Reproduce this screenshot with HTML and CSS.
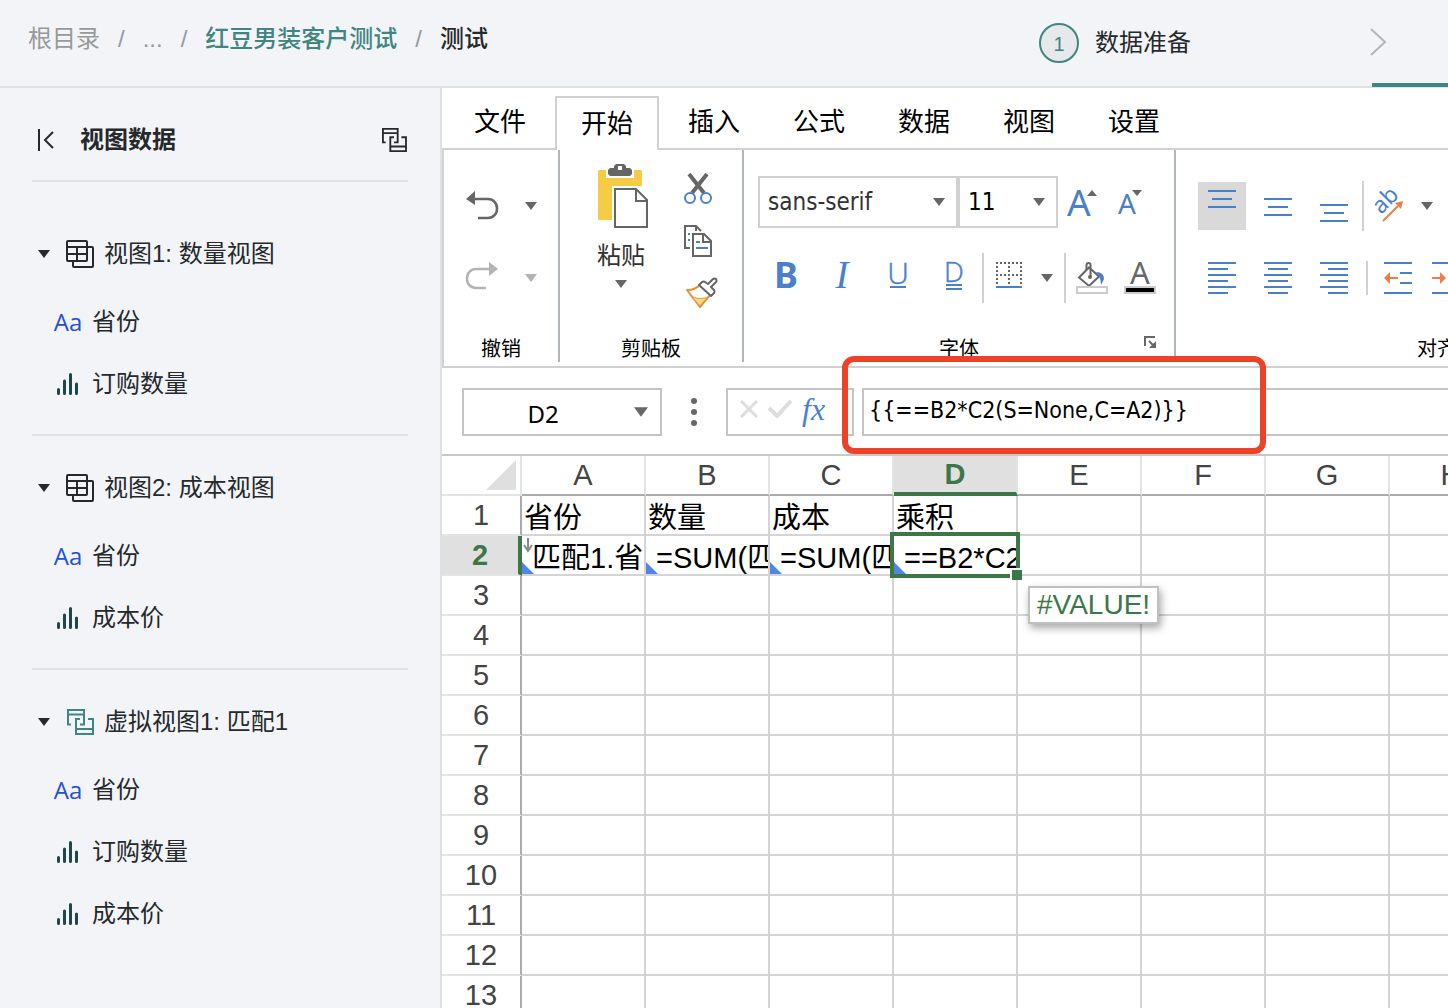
FILE: index.html
```html
<!DOCTYPE html>
<html lang="zh-CN">
<head>
<meta charset="utf-8">
<title>测试</title>
<meta name="viewport" content="width=device-width, initial-scale=1">
<link rel="stylesheet" href="styles.css">
</head>
<body>
<svg class="defs" aria-hidden="true">
  <symbol id="caret" viewBox="0 0 12 8"><path d="M0 0h12L6 8z" fill="currentColor"/></symbol>
  <symbol id="table" viewBox="0 0 28 28"><g fill="none" stroke="currentColor" stroke-width="2"><rect x="1" y="1" width="20" height="20" rx="1"/><path d="M1 7h20M1 14h20M11 7v14M21 7h5a1 1 0 0 1 1 1v18a1 1 0 0 1-1 1H8a1 1 0 0 1-1-1v-5"/></g></symbol>
  <symbol id="merge" viewBox="0 0 28 26"><g fill="none" stroke="currentColor" stroke-width="2"><path d="M5 15.500H2V1h16v14.500h-4M2 5.500h16M14 10h-4v15h17V10h-5M10 20h17"/></g></symbol>
  <symbol id="bars" viewBox="0 0 22 22"><path d="M1.500 16.500v4M7.500 8v12.500M13.500 1.500v19M19.500 11v9.500" fill="none" stroke="#1f4648" stroke-width="3" stroke-linecap="round"/></symbol>
</svg>
<div class="app">
  <header class="topbar">
    <nav class="crumbs" aria-label="路径">
      <a href="#" class="crumb">根目录</a><span>/</span>
      <a href="#" class="crumb">...</a><span>/</span>
      <a href="#" class="crumb crumb-link">红豆男装客户测试</a><span>/</span>
      <span class="crumb-current">测试</span>
    </nav>
    <div class="steps">
      <a href="#" class="step"><span class="step-num">1</span><span>数据准备</span></a>
      <div class="step-active">
        <svg width="16" height="28" viewBox="2 0 16 28"><path d="M1 1l14 13L1 27" fill="none" stroke="#b2b5b9" stroke-width="2"/></svg>
      </div>
    </div>
  </header>
  <div class="workspace">
    <aside class="sidebar">
      <div class="side-head">
        <button type="button" class="plain" aria-label="收起"><svg width="18" height="22" viewBox="0 0 18 22"><path d="M2 0v22M16 3L8 11l8 8" fill="none" stroke="currentColor" stroke-width="2"/></svg></button>
        <h2>视图数据</h2>
        <button type="button" class="plain" aria-label="匹配"><svg width="26" height="24"><use href="#merge"/></svg></button>
      </div>
      <section class="view">
        <h3><svg class="fold"><use href="#caret"/></svg><svg class="view-icon"><use href="#table"/></svg>视图1: 数量视图</h3>
        <ul>
          <li><span class="field-icon">Aa</span>省份</li>
          <li><span class="field-icon"><svg width="22" height="22"><use href="#bars"/></svg></span>订购数量</li>
        </ul>
      </section>
      <section class="view">
        <h3><svg class="fold"><use href="#caret"/></svg><svg class="view-icon"><use href="#table"/></svg>视图2: 成本视图</h3>
        <ul>
          <li><span class="field-icon">Aa</span>省份</li>
          <li><span class="field-icon"><svg width="22" height="22"><use href="#bars"/></svg></span>成本价</li>
        </ul>
      </section>
      <section class="view">
        <h3><svg class="fold"><use href="#caret"/></svg><svg class="view-icon virtual"><use href="#merge"/></svg>虚拟视图1: 匹配1</h3>
        <ul>
          <li><span class="field-icon">Aa</span>省份</li>
          <li><span class="field-icon"><svg width="22" height="22"><use href="#bars"/></svg></span>订购数量</li>
          <li><span class="field-icon"><svg width="22" height="22"><use href="#bars"/></svg></span>成本价</li>
        </ul>
      </section>
    </aside>
    <main class="editor">
      <div class="tabs">
        <button type="button" class="tab">文件</button>
        <button type="button" class="tab active">开始</button>
        <button type="button" class="tab">插入</button>
        <button type="button" class="tab">公式</button>
        <button type="button" class="tab">数据</button>
        <button type="button" class="tab">视图</button>
        <button type="button" class="tab">设置</button>
      </div>
      <div class="ribbon">
        <div class="group group-undo">
          <div class="tools tools-top">
            <button type="button" class="tool" aria-label="撤销"><svg width="32" height="32" viewBox="0 0 32 32"><path d="M0 9l9-8v14z" fill="#666"/><path d="M8 9h14a9 9 0 0 1 9 9.500a9 9 0 0 1-9 9.500h-10" fill="none" stroke="#666" stroke-width="2.500"/></svg></button>
            <button type="button" class="drop" aria-label="撤销列表"><svg><use href="#caret"/></svg></button>
          </div>
          <div class="tools tools-bottom faded">
            <button type="button" class="tool" aria-label="恢复"><svg width="32" height="32" viewBox="0 0 32 32"><path d="M32 7l-9-7v14z" fill="#b3b3b3"/><path d="M24 7H10a9 9 0 0 0-9 9.500a9 9 0 0 0 9 9.500h10" fill="none" stroke="#b3b3b3" stroke-width="2.500"/></svg></button>
            <button type="button" class="drop" aria-label="恢复列表"><svg><use href="#caret"/></svg></button>
          </div>
          <div class="group-label">撤销</div>
        </div>
        <div class="group group-clip">
          <div class="clip-body">
            <button type="button" class="paste">
              <svg width="50" height="64" viewBox="-2 0 50 64"><rect y="6" width="44" height="50" rx="1" fill="#f6cc46"/><path d="M8 3h28v11H8zM14 22h36v42H14z" fill="#fff"/><path d="M12 4h4V2l2-2h8l2 2v2h4l2 2v4l-2 2H12l-2-2V6z" fill="#666"/><path d="M20 2h4v4h-4z" fill="#fff"/><path d="M17 25h21l11 11v27H17zM38 25v12h11" fill="#fff" stroke="#666" stroke-width="2"/></svg>
              <span>粘贴</span>
              <svg class="paste-drop"><use href="#caret"/></svg>
            </button>
            <div class="clip-tools">
              <button type="button" class="plain" aria-label="剪切"><svg width="34" height="32" viewBox="0 0 34 32"><path d="M5 1l15 19M23 1L8 20" stroke="#666" stroke-width="4"/><g fill="#fff" stroke="#4a7fca" stroke-width="2"><circle cx="6" cy="25" r="5"/><circle cx="22" cy="25" r="5"/></g></svg></button>
              <button type="button" class="plain" aria-label="复制"><svg width="34" height="32" viewBox="0 0 34 32"><g fill="none" stroke="#666" stroke-width="2"><path d="M6 23H1V1h11l5 5M12 1v5"/><path d="M9 9h11l7 7v15H9z" fill="#fff"/><path d="M19 9v8h8"/></g><path d="M4 8h2v2H4zM4 14h2v2H4zM12 16h4v2h-4zM12 22h12v2H12z" fill="#4a7fca"/></svg></button>
              <button type="button" class="plain" aria-label="格式刷"><svg width="34" height="32" viewBox="0 0 34 32"><path d="M3 13c6 0 10-2 13-5l10 10L16 30z" fill="#fff" stroke="#e2913a" stroke-width="2" stroke-linejoin="round"/><path d="M6 18c6 5 11 3 17 3l-7 8z" fill="#f9d57c" stroke="#e2913a"/><path d="M15 8l3-3q2-1 3 0l3 2 5-5q2-1 3 0 1 2 0 3l-5 5 3 3q1 2 0 3l-3 3z" fill="#fff" stroke="#666" stroke-width="2" stroke-linejoin="round"/></svg></button>
            </div>
          </div>
          <div class="group-label">剪贴板</div>
        </div>
        <div class="group group-font">
          <div class="tools tools-top font-pickers">
            <label class="picker picker-font"><select aria-label="字体"><option>sans-serif</option></select><svg><use href="#caret"/></svg></label>
            <label class="picker picker-size"><select aria-label="字号"><option>11</option></select><svg><use href="#caret"/></svg></label>
            <button type="button" class="tool" aria-label="增大字号"><svg width="32" height="32" viewBox="0 0 32 32"><text x="1" y="30" class="glyph" font-size="37">A</text><path d="M21 10h10l-5-6z" fill="#666"/></svg></button>
            <button type="button" class="tool" aria-label="减小字号"><svg width="32" height="32" viewBox="0 0 32 32"><text x="4" y="28" class="glyph" font-size="28">A</text><path d="M18 4h10l-5 6z" fill="#666"/></svg></button>
          </div>
          <div class="tools tools-bottom">
            <div class="spaced">
              <button type="button" class="tool" aria-label="加粗"><svg width="32" height="32" viewBox="0 0 32 32"><text x="16" y="26" text-anchor="middle" class="glyph bold" font-size="36">B</text></svg></button>
              <button type="button" class="tool" aria-label="倾斜"><svg width="32" height="32" viewBox="0 0 32 32"><text x="16" y="26" text-anchor="middle" class="glyph italic" font-size="39">I</text></svg></button>
              <button type="button" class="tool" aria-label="下划线"><svg width="32" height="32" viewBox="0 0 32 32"><text x="16" y="22" text-anchor="middle" class="glyph light" font-size="30">U</text><path d="M8 25h16" stroke="#4a7fca" stroke-width="2"/></svg></button>
              <button type="button" class="tool" aria-label="双下划线"><svg width="32" height="32" viewBox="0 0 32 32"><text x="16" y="20" text-anchor="middle" class="glyph light" font-size="28">D</text><path d="M8 23h16M8 27h16" stroke="#4a7fca" stroke-width="2"/></svg></button>
            </div>
            <span class="sep"></span>
            <button type="button" class="tool" aria-label="边框"><svg width="32" height="32" viewBox="0 0 32 32"><path d="M2 1h26M2 13h26M3 0v22M15 0v22M27 0v22" fill="none" stroke="#666" stroke-width="2" stroke-dasharray="2 2"/><path d="M2 25h26" stroke="#4a7fca" stroke-width="2"/></svg></button>
            <button type="button" class="drop narrow" aria-label="边框样式"><svg><use href="#caret"/></svg></button>
            <span class="sep"></span>
            <button type="button" class="tool" aria-label="填充颜色"><svg width="32" height="32" viewBox="0 0 32 32"><path d="M3 15.500L13 5.500l10 9-10 9.500z" fill="#fff" stroke="#666" stroke-width="2"/><path d="M10.500 8V3q0-2 2-2t2 2v12" fill="none" stroke="#666" stroke-width="2"/><circle cx="14" cy="15" r="2" fill="#666"/><path d="M20 10q8 0 8 7l-3 6q0-8-5-13z" fill="#4a7fca"/><rect x="1" y="25" width="30" height="6" fill="#fff" stroke="#ccc" stroke-width="2"/></svg></button>
            <button type="button" class="tool" aria-label="字体颜色"><svg width="32" height="32" viewBox="0 0 32 32"><text x="16" y="22" text-anchor="middle" class="glyph grey" font-size="31">A</text><rect x="1" y="25" width="30" height="6" fill="#000" stroke="#ccc" stroke-width="2"/></svg></button>
          </div>
          <div class="group-label">字体</div>
          <button type="button" class="launcher" aria-label="字体设置"><svg width="12" height="12" viewBox="0 0 12 12"><path d="M1 10V1h10" fill="none" stroke="#666" stroke-width="2"/><path d="M5 5l4 4" stroke="#666" stroke-width="2"/><path d="M12 5v7H5z" fill="#666"/></svg></button>
        </div>
        <div class="group group-align">
          <div class="tools tools-top">
            <div class="spaced">
              <button type="button" class="tool pressed" aria-label="顶端对齐"><svg width="28" height="32" viewBox="0 0 28 32"><path class="line" d="M0 1h28M4 9h20M0 17h28"/></svg></button>
              <button type="button" class="tool" aria-label="垂直居中"><svg width="28" height="32" viewBox="0 0 28 32"><path class="line" d="M0 9h28M4 17h20M0 25h28"/></svg></button>
              <button type="button" class="tool" aria-label="底端对齐"><svg width="28" height="32" viewBox="0 0 28 32"><path class="line" d="M0 15h28M4 23h20M0 31h28"/></svg></button>
            </div>
            <span class="sep"></span>
            <button type="button" class="tool" aria-label="文字方向"><svg width="32" height="32" viewBox="0 0 32 32"><text x="7" y="25" transform="rotate(-45 7 25)" class="glyph" font-size="23">ab</text><path d="M9 31l15-15" stroke="#ec7e4b" stroke-width="2"/><path d="M29 11l-2 8-6-6z" fill="#ec7e4b"/></svg></button>
            <button type="button" class="drop narrow" aria-label="文字方向列表"><svg><use href="#caret"/></svg></button>
          </div>
          <div class="tools tools-bottom">
            <div class="spaced">
              <button type="button" class="tool" aria-label="左对齐"><svg width="28" height="32" viewBox="0 0 28 32"><path class="line" d="M0 1h28M0 7h20M0 13h28M0 19h20M0 25h28M0 31h20"/></svg></button>
              <button type="button" class="tool" aria-label="居中"><svg width="28" height="32" viewBox="0 0 28 32"><path class="line" d="M0 1h28M4 7h20M0 13h28M4 19h20M0 25h28M4 31h20"/></svg></button>
              <button type="button" class="tool" aria-label="右对齐"><svg width="28" height="32" viewBox="0 0 28 32"><path class="line" d="M0 1h28M8 7h20M0 13h28M8 19h20M0 25h28M8 31h20"/></svg></button>
            </div>
            <span class="sep sep-short"></span>
            <button type="button" class="tool" aria-label="减少缩进"><svg width="28" height="32" viewBox="0 0 28 32"><path class="line" d="M0 1h28M16 11h12M16 21h12M0 31h28"/><path d="M5 16h9" stroke="#ec7e4b" stroke-width="2"/><path d="M0 16l6-6v12z" fill="#ec7e4b"/></svg></button>
            <button type="button" class="tool" aria-label="增加缩进"><svg width="28" height="32" viewBox="0 0 28 32"><path class="line" d="M0 1h28M16 11h12M16 21h12M0 31h28"/><path d="M0 16h9" stroke="#ec7e4b" stroke-width="2"/><path d="M14 16l-6-6v12z" fill="#ec7e4b"/></svg></button>
          </div>
          <div class="group-label">对齐方式</div>
        </div>
      </div>
      <div class="formula-bar">
        <label class="name-box"><input type="text" value="D2" aria-label="名称框"><svg><use href="#caret"/></svg></label>
        <svg class="dots" width="6" height="28" viewBox="0 0 6 28"><g fill="#666"><circle cx="3" cy="3" r="3"/><circle cx="3" cy="14" r="3"/><circle cx="3" cy="25" r="3"/></g></svg>
        <div class="fx-box">
          <button type="button" class="plain" aria-label="取消"><svg width="18" height="18" viewBox="0 0 18 18"><path d="M1 1l16 16M17 1L1 17" stroke="#ddd" stroke-width="3"/></svg></button>
          <button type="button" class="plain" aria-label="确认"><svg width="24" height="18" viewBox="0 0 24 18"><path d="M1 8l8 8L23 1" fill="none" stroke="#ddd" stroke-width="4"/></svg></button>
          <button type="button" class="plain fx" aria-label="插入函数">fx</button>
        </div>
        <input type="text" class="formula" aria-label="公式" value="{{==B2*C2(S=None,C=A2)}}">
        <div class="highlight"></div>
      </div>
      <div class="sheet">
        <table>
          <thead>
            <tr><th class="corner" aria-label="全选"></th><th>A</th><th>B</th><th>C</th><th class="on">D</th><th>E</th><th>F</th><th>G</th><th>H</th></tr>
          </thead>
          <tbody>
            <tr><th>1</th><td>省份</td><td>数量</td><td>成本</td><td>乘积</td><td></td><td></td><td></td><td></td></tr>
            <tr><th class="on">2</th>
              <td class="bound"><svg class="expand" width="10" height="16" viewBox="0 0 10 16"><path d="M5 0v12M1 7l4 6 4-6" fill="none" stroke="#888" stroke-width="2"/></svg><div class="clip">匹配1.省</div></td>
              <td class="bound"><div class="clip">=SUM(匹</div></td>
              <td class="bound"><div class="clip">=SUM(匹</div></td>
              <td class="bound current"><div class="clip">==B2*C2</div><div class="selection"></div><div class="handle"></div><div class="tip">#VALUE!</div></td>
              <td></td><td></td><td></td><td></td></tr>
            <tr><th>3</th><td></td><td></td><td></td><td></td><td></td><td></td><td></td><td></td></tr>
            <tr><th>4</th><td></td><td></td><td></td><td></td><td></td><td></td><td></td><td></td></tr>
            <tr><th>5</th><td></td><td></td><td></td><td></td><td></td><td></td><td></td><td></td></tr>
            <tr><th>6</th><td></td><td></td><td></td><td></td><td></td><td></td><td></td><td></td></tr>
            <tr><th>7</th><td></td><td></td><td></td><td></td><td></td><td></td><td></td><td></td></tr>
            <tr><th>8</th><td></td><td></td><td></td><td></td><td></td><td></td><td></td><td></td></tr>
            <tr><th>9</th><td></td><td></td><td></td><td></td><td></td><td></td><td></td><td></td></tr>
            <tr><th>10</th><td></td><td></td><td></td><td></td><td></td><td></td><td></td><td></td></tr>
            <tr><th>11</th><td></td><td></td><td></td><td></td><td></td><td></td><td></td><td></td></tr>
            <tr><th>12</th><td></td><td></td><td></td><td></td><td></td><td></td><td></td><td></td></tr>
            <tr><th>13</th><td></td><td></td><td></td><td></td><td></td><td></td><td></td><td></td></tr>
          </tbody>
        </table>
      </div>
    </main>
  </div>
</div>
</body>
</html>
```
FILE: styles.css
```css
* { box-sizing: border-box; }

body {
  margin: 0;
  font-family: "Liberation Sans", "Noto Sans CJK SC", sans-serif;
  font-size: 24px;
  line-height: 32px;
  color: #25292b;
  background: #f3f4f8;
}

button, input, select { font: inherit; color: inherit; }
button { margin: 0; padding: 0; border: 0; background: none; }
a { color: inherit; text-decoration: none; }
svg { display: block; flex: none; }
.defs { position: absolute; width: 0; height: 0; }
h2, h3, ul { margin: 0; padding: 0; list-style: none; }

.app { display: flex; flex-direction: column; height: 100vh; overflow: hidden; }

/* top bar */
.topbar {
  flex: none;
  display: flex;
  justify-content: space-between;
  height: 88px;
  border-bottom: 2px solid #dde1e5;
}
.crumbs { display: flex; align-items: center; gap: 18px; padding: 0 0 8px 28px; color: #97999b; white-space: nowrap; }
.crumb-link { color: #3f8580; font-weight: 500; }
.crumb-current { color: #25292b; font-weight: 500; }
.steps { display: flex; }
.step { display: flex; align-items: center; gap: 16px; margin-right: 181px; white-space: nowrap; }
.step-num {
  width: 40px;
  height: 40px;
  border: 2px solid #3f8580;
  border-radius: 50%;
  background: #e6e8eb;
  color: #3f8580;
  font-size: 20px;
  line-height: 38px;
  text-align: center;
}
.step-active {
  display: flex;
  align-items: center;
  width: 76px;
  margin-bottom: -1px;
  border-bottom: 4px solid #3f8580;
}
.step-active svg { overflow: visible; }

.workspace { flex: 1; display: flex; min-height: 0; }

/* sidebar */
.sidebar { flex: none; width: 442px; padding: 0 32px; border-right: 2px solid #dde1e5; }
.side-head {
  display: flex;
  align-items: center;
  height: 94px;
  margin-bottom: 20px;
  padding: 12px 1px 0 5px;
  border-bottom: 2px solid #dde1e5;
}
.side-head h2 { flex: 1; padding-left: 25px; font-size: 24px; font-weight: 700; }
.view { padding: 15px 0 19px; border-bottom: 2px solid #dde1e5; }
.view:last-child { border-bottom: 0; }
.view h3 { display: flex; align-items: center; height: 74px; padding-left: 6px; font-size: 24px; font-weight: 400; white-space: nowrap; }
.view li { display: flex; align-items: center; height: 62px; padding-left: 21px; }
.fold { width: 12px; height: 8px; margin-right: 16px; }
.view-icon { width: 28px; height: 28px; margin-right: 10px; }
.virtual { color: #3f8580; }
.field-icon { display: flex; justify-content: center; width: 30px; margin-right: 9px; font-family: "Open Sans", sans-serif; color: #2450d8; }

/* tabs */
.editor { flex: 1; min-width: 0; display: flex; flex-direction: column; background: #fff; color: #000; }
.tabs { flex: none; display: flex; align-items: flex-end; gap: 1px; height: 62px; padding-left: 6px; border-bottom: 2px solid #d1d1d1; }
.tab { width: 104px; height: 52px; font-size: 26px; }
.tab.active { height: 54px; margin: 0 2px -2px; border: 2px solid #d1d1d1; border-bottom: 0; background: #fff; }

/* ribbon */
.ribbon { flex: none; display: flex; height: 218px; overflow: hidden; border-left: 2px solid #d1d1d1; border-bottom: 2px solid #d1d1d1; }
.group { flex: none; display: flex; flex-direction: column; position: relative; height: 212px; padding-top: 20px; border-right: 2px solid #b0b6bb; }
.group-label { margin-top: auto; font-size: 20px; line-height: 26px; text-align: center; }
.group-undo { width: 116px; }
.group-clip { width: 184px; }
.group-font { width: 432px; }
.group-align { width: 564px; }
.group-undo .tools { padding-left: 14px; }
.group-font .tools { padding-left: 18px; }
.group-font .font-pickers { padding-left: 14px; }
.group-align .tools { padding-left: 22px; }
.tools { display: flex; align-items: center; height: 72px; }
.font-pickers { padding-bottom: 8px; }
.spaced { display: flex; gap: 8px; }
.plain { display: flex; align-items: center; }
.tool { display: flex; flex: none; align-items: center; justify-content: center; width: 48px; height: 48px; }
.tool svg { overflow: visible; }
.pressed { background: #d9d9d9; }
.drop { display: flex; flex: none; align-items: center; justify-content: center; width: 50px; height: 48px; color: #666; }
.drop svg, .picker svg, .paste-drop { width: 12px; height: 8px; color: #666; }
.narrow { width: 26px; }
.faded .drop svg { color: #b3b3b3; }
.sep { flex: none; width: 2px; height: 50px; margin: 0 2px 0 4px; background: #d1d1d1; }
.sep-short { height: 34px; margin: 0 6px 0 8px; }
.line { stroke: #4a7fca; stroke-width: 2; }
.glyph { font-family: "Noto Sans", sans-serif; fill: #4a7fca; }
.bold { font-weight: 700; }
.italic { font-family: "Liberation Serif", serif; font-style: italic; }
.light { font-family: "Open Sans", sans-serif; font-weight: 300; stroke: #4a7fca; stroke-width: 0.5; }
.grey { fill: #666; }

.clip-body { display: flex; justify-content: space-between; margin-top: -6px; padding: 0 24px 0 36px; }
.paste { display: flex; flex-direction: column; align-items: center; color: #333; }
.paste > svg { overflow: visible; }
.paste span { margin-top: 12px; line-height: 32px; }
.paste-drop { margin-top: 8px; }
.clip-tools { display: flex; flex-direction: column; gap: 20px; padding-top: 9px; }

.picker { display: flex; align-items: center; position: relative; height: 52px; }
.picker select { width: 100%; height: 100%; padding: 0 8px; border: 2px solid #d1d1d1; border-radius: 0; background: #fff; appearance: none; font-family: "DejaVu Sans Condensed", "Noto Sans", sans-serif; }
.picker svg { position: absolute; right: 13px; }
.picker-font { width: 200px; color: #333; }
.picker-size { width: 100px; }
.launcher { position: absolute; right: 18px; bottom: 14px; }

/* formula bar */
.formula-bar { flex: none; display: flex; position: relative; height: 88px; padding: 20px 0 18px 20px; border-bottom: 2px solid #c8c8c8; font-family: "Noto Sans", sans-serif; }
.name-box { display: flex; align-items: center; position: relative; width: 200px; height: 48px; }
.name-box input { width: 100%; height: 100%; padding: 2px 38px 0 0; border: 2px solid #c4c4c4; text-align: center; }
.name-box svg { position: absolute; right: 14px; width: 14px; height: 10px; color: #666; }
.dots { margin: 10px 29px; }
.fx-box { display: flex; align-items: center; gap: 10px; flex: none; width: 128px; height: 48px; padding: 0 0 6px 12px; border: 2px solid #c4c4c4; }
.fx { font-family: "Liberation Serif", serif; font-size: 32px; font-style: italic; color: #4a7fca; }
.formula { flex: 1; min-width: 0; height: 48px; margin-left: 8px; padding: 0 0 4px 5px; border: 2px solid #c4c4c4; border-right: 0; font-family: "DejaVu Sans Condensed", "Noto Sans", sans-serif; font-size: 23px; }
.highlight { position: absolute; left: 400px; top: -12px; width: 424px; height: 98px; border: 6px solid #ed4128; border-radius: 12px; pointer-events: none; }

/* sheet */
.sheet { flex: 1; min-height: 0; overflow: hidden; }
table { width: 1072px; table-layout: fixed; border-collapse: separate; border-spacing: 0; font-size: 29px; }
th, td { position: relative; height: 40px; padding: 0; line-height: 36px; white-space: nowrap; }
th { width: 124px; font-weight: 400; color: #444; border-right: 2px solid #e2e6e2; }
thead th { border-bottom: 2px solid #ababab; }
tbody th { border-right-color: #ababab; border-bottom: 2px solid #e2e6e2; }
td { padding: 6px 0 0 2px; line-height: 32px; border-right: 2px solid #d4d4d4; border-bottom: 2px solid #d4d4d4; }
.corner { width: 80px; border-bottom-color: #e2e6e2; }
.corner::after { content: ""; position: absolute; right: 4px; bottom: 4px; border: 15px solid; border-color: transparent #dfdfdf #dfdfdf transparent; }
th.on { background: #e0e0e0; color: #3d7748; font-weight: 700; }
thead th.on { border-bottom: 4px solid #3d7748; }
tbody th.on { border-right: 4px solid #3d7748; }
.bound { padding-left: 10px; }
.bound::after { content: ""; position: absolute; left: 0; bottom: 0; border: 6px solid; border-color: transparent transparent #5187e0 #5187e0; }
.clip { overflow: hidden; }
.expand { position: absolute; left: 1px; top: 2px; }
.current { z-index: 1; }
.selection { position: absolute; inset: -4px; border: 4px solid #3d7748; }
.handle { position: absolute; right: -6px; bottom: -6px; width: 12px; height: 12px; border: 2px solid #fff; border-width: 2px 0 0 2px; background: #3d7748; }
.tip { position: absolute; left: 134px; top: 50px; padding: 0 7px; border: 2px solid #c0c0c0; background: #fff; box-shadow: 2px 4px 8px rgba(0, 0, 0, .35); color: #3d7748; font-size: 28px; line-height: 34px; }
```
